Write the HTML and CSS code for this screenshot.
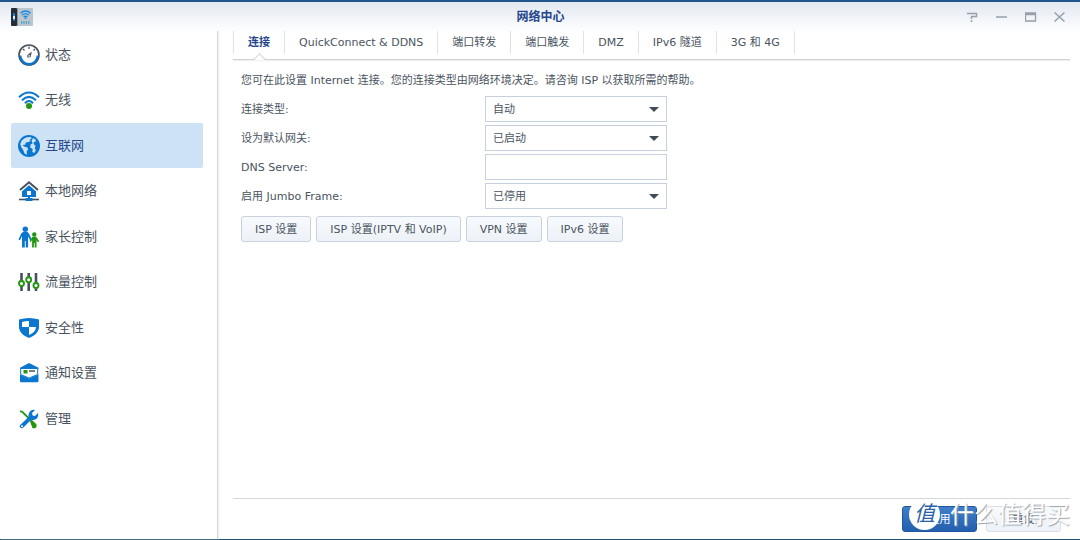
FILE: index.html
```html
<!DOCTYPE html>
<html lang="zh-CN">
<head>
<meta charset="utf-8">
<title>网络中心</title>
<link rel="stylesheet" href="styles.css">
</head>
<body>
<div class="window">
  <header class="titlebar">
    <svg class="app-icon" width="22" height="18" viewBox="0 0 22 18">
      <rect width="22" height="18" rx="1" fill="#bcc5cd"/>
      <rect width="6" height="18" rx="1" fill="#272d34"/>
      <rect x="6" width="1" height="18" fill="#8d969e"/>
      <rect x="2" y="5" width="2" height="8" rx="1" fill="#2687d8"/>
      <rect x="2" y="8" width="2" height="3" fill="#d8f1ff"/>
      <g fill="none" stroke="#1688e8" stroke-width="1.3"><path d="M9.500 5.200Q14.500 0.800 19.500 5.200M11 7.200Q14.500 4 18 7.200M12.600 9Q14.500 7.500 16.400 9"/></g>
      <circle cx="14.500" cy="10.200" r="0.900" fill="#1688e8"/>
      <path d="M10 14.500h9" stroke="#3c9fcc" stroke-width="2.500" stroke-dasharray="1.200 1.200"/>
    </svg>
    <h1 class="title">网络中心</h1>
    <div class="controls">
      <button class="control" aria-label="帮助"><svg width="12" height="12" viewBox="0 0 12 12"><path d="M0 2.500h9.500v3H4.500V8M4.500 9v2" fill="none" stroke="#979fac" stroke-width="1.500"/></svg></button>
      <button class="control" aria-label="最小化"><svg width="12" height="12" viewBox="0 0 12 12"><path d="M0 6h11" stroke="#979fac" stroke-width="1.500"/></svg></button>
      <button class="control" aria-label="最大化"><svg width="12" height="12" viewBox="0 0 12 12"><path d="M0.500 2h10v8H0.500zM0.500 3.500h10" fill="none" stroke="#979fac" stroke-width="1.300"/></svg></button>
      <button class="control" aria-label="关闭"><svg width="12" height="12" viewBox="0 0 12 12"><path d="M0.500 1.500l10 9M10.500 1.500l-10 9" stroke="#979fac" stroke-width="1.500"/></svg></button>
    </div>
  </header>
  <div class="body">
    <div class="sidebar">
    <nav class="nav">
      <a class="nav-item" href="#status"><svg class="nav-icon" viewBox="0 0 22 22"><circle cx="11" cy="11" r="10" fill="#fff" stroke="#47515e" stroke-width="1.600"/><path d="M2.300 11.500A8.700 8.700 0 0 0 19.700 11.500" fill="none" stroke="#0b76cf" stroke-width="2.200"/><path d="M11 2.500v2.500M5 5l1.500 1.500M17 5l-1.500 1.500" stroke="#47515e" stroke-width="1.200"/><path d="M13.800 7.500L12.700 13l-3.200.8-.3-2.500z" fill="#47515e"/><circle cx="11.200" cy="11.900" r="0.800" fill="#fff"/></svg>状态</a>
      <a class="nav-item" href="#wireless"><svg class="nav-icon" viewBox="0 0 22 22"><g fill="none" stroke="#0b76cf" stroke-width="2"><path d="M1 8.200Q11-1.200 21 8.200M4 11.200Q11 4.500 18 11.200M7 14.200Q11 10 15 14.200"/></g><circle cx="11" cy="17" r="3" fill="#249612"/></svg>无线</a>
      <a class="nav-item nav-item-active" href="#internet" aria-current="page"><svg class="nav-icon" viewBox="0 0 22 22"><circle cx="11" cy="11" r="11" fill="#0b76cf"/><path d="M2.300 9L3.600 5.800 6.500 3.300 9 2.200l4-.1.500 1.600-2 .8 1.200 1.200L10.500 7l-2.800.6-.5 2.200-2.700.2 1.600 1.500 3.300 1.100.7 2-1.500 1.900.4 3.300-2.500-1.300-1.200-3.300L3.200 12zM15 3l2.500 1.500.3 2-2.300.7.300 2 1.800 1.500-.8 2.500 1 2.300-1.500 2.500-2-1 .4-3-2.500-1.600.4-3 2-1-1-2.500z" fill="#cde3f5"/></svg>互联网</a>
      <a class="nav-item" href="#lan"><svg class="nav-icon" viewBox="0 0 22 22"><path d="M4 10.500V17h14v-6.500L11 4.500z" fill="#0b76cf"/><path d="M2 10.500L11 2.500 20 10.500" fill="none" stroke="#fff" stroke-width="4"/><path d="M2 10L11 2.200 20 10" fill="none" stroke="#47515e" stroke-width="2"/><path d="M11 6.200L4.500 12V17h13v-5z" fill="#0b76cf"/><rect x="9" y="11" width="4" height="4" fill="#fff"/><path d="M10 17h2v2h-2z" fill="#0b76cf"/><path d="M1 19.500h20" stroke="#47515e" stroke-width="1.600"/><rect x="7.500" y="18" width="7" height="3" fill="#0b76cf"/></svg>本地网络</a>
      <a class="nav-item" href="#parental"><svg class="nav-icon" viewBox="0 0 22 22"><g fill="#0b76cf"><circle cx="7.300" cy="3.300" r="2.700"/><path d="M5 6h4.600l1.300 1.500 2.800 6-1.600.8-2-4V21.500H7.700V15h-.9v6.500H4V10l-2 4.300-1.500-.8 2.700-6z"/></g><g fill="#249612"><circle cx="16.300" cy="8.500" r="2.200"/><path d="M14.500 10.800h3.600l3.200 4.400-1.300 1.100-1.500-2V21.500h-1.800V17h-.8v4.500h-1.800v-7.400l-1.200 2-1.300-.9z"/></g></svg>家长控制</a>
      <a class="nav-item" href="#traffic"><svg class="nav-icon" viewBox="0 0 22 22"><path d="M3.500 2v18M10.700 2v18M18 2v18" stroke="#47515e" stroke-width="2.600"/><g fill="#fff" stroke="#249612" stroke-width="1.900"><circle cx="3.500" cy="12.500" r="2.500"/><circle cx="10.700" cy="8.800" r="2.500"/><circle cx="18" cy="14.500" r="2.500"/></g></svg>流量控制</a>
      <a class="nav-item" href="#security"><svg class="nav-icon" viewBox="0 0 22 22"><path d="M1 2.500Q11-.5 21 2.500V11Q20 17.500 11 21 2 17.500 1 11z" fill="#0b76cf"/><path d="M11 4v6H4V5Q7 4 11 4zM11 10h7q-.5 5.500-7 8z" fill="#fff"/></svg>安全性</a>
      <a class="nav-item" href="#notify"><svg class="nav-icon" viewBox="0 0 22 22"><path d="M2 5.800L11 1l9.500 4.800V7H2z" fill="#0b76cf"/><path d="M2.700 6.500h17v6L11 16l-8.300-3.500z" fill="#fff" stroke="#0b76cf" stroke-width="1"/><rect x="5.500" y="8" width="4" height="3.500" fill="#249612"/><path d="M11 9h6" stroke="#47515e" stroke-width="1.500"/><path d="M2 12.500l9 4 9.500-4V19q0 1.200-1.200 1.200H3.200Q2 20.200 2 19z" fill="#0b76cf"/></svg>通知设置</a>
      <a class="nav-item" href="#manage"><svg class="nav-icon" viewBox="0 0 22 22"><path d="M2 3.200L4.500 4l9 9" fill="none" stroke="#249612" stroke-width="1.800"/><path d="M12 13.500l2-1.500 4.500 4.200v2.700l-1.500 1.300h-2.500z" fill="#249612"/><path d="M2.200 19.600a1.800 1.800 0 0 1 0-2.600l8.300-8q-.4-4.300 2.500-6.500 2-1.200 4-.5L14 5l.6 2.400 2.400.5 3-3q.6 4.400-2 6.200-2.200 1.400-4.700.6l-8.200 8q-1.500 1.200-2.900-.1z" fill="#0b76cf"/><circle cx="4" cy="18.200" r="1" fill="#fff"/></svg>管理</a>
    </nav>
    </div>
    <main class="main">
      <div class="tabs" role="tablist">
        <button class="tab tab-active" role="tab" aria-selected="true">连接</button>
        <button class="tab" role="tab">QuickConnect &amp; DDNS</button>
        <button class="tab" role="tab">端口转发</button>
        <button class="tab" role="tab">端口触发</button>
        <button class="tab" role="tab">DMZ</button>
        <button class="tab" role="tab">IPv6 隧道</button>
        <button class="tab" role="tab">3G 和 4G</button>
      </div>
      <form class="panel">
        <p class="intro">您可在此设置 Internet 连接。您的连接类型由网络环境决定。请咨询 ISP 以获取所需的帮助。</p>
        <div class="row"><label for="type">连接类型:</label><select class="field select" id="type"><option>自动</option></select></div>
        <div class="row"><label for="gateway">设为默认网关:</label><select class="field select" id="gateway"><option>已启动</option></select></div>
        <div class="row"><label for="dns">DNS Server:</label><input class="field" id="dns" type="text"></div>
        <div class="row"><label for="jumbo">启用 Jumbo Frame:</label><select class="field select" id="jumbo"><option>已停用</option></select></div>
        <div class="actions">
          <button class="button" type="button">ISP 设置</button>
          <button class="button" type="button">ISP 设置(IPTV 和 VoIP)</button>
          <button class="button" type="button">VPN 设置</button>
          <button class="button" type="button">IPv6 设置</button>
        </div>
      </form>
      <footer class="footer">
        <button class="button button-wide button-primary" type="button">应用</button>
        <button class="button button-wide button-reset" type="button">重设</button>
        <div class="watermark"><span class="watermark-badge">值</span><span>什么值得买</span></div>
      </footer>
    </main>
  </div>
</div>
</body>
</html>
```

FILE: styles.css
```css
* { box-sizing: border-box; }

body {
  margin: 0;
  background: #fff;
  color: #4a5461;
  font: 11px/16px "DejaVu Sans", "Noto Sans CJK SC", sans-serif;
}

button, input, select { font: inherit; color: inherit; }

.window {
  display: flex;
  flex-direction: column;
  min-height: 100vh;
  border-top: 2px solid #23548c;
  border-bottom: 1px solid #24506f;
  background: linear-gradient(#e2e8f1, #fff 30px);
}

.titlebar {
  display: grid;
  grid-template-columns: 1fr auto 1fr;
  align-items: center;
  height: 29px;
  padding: 0 14px 0 11px;
}

.title {
  margin: 0;
  padding-left: 4px;
  color: #27478c;
  font-size: 12px;
  font-weight: bold;
}

.controls { display: flex; justify-content: flex-end; gap: 17px; }

.control {
  display: flex;
  padding: 0;
  border: 0;
  background: none;
}

.body { display: flex; flex: 1; }

.sidebar {
  flex: 0 0 218px;
  padding: 1px 14px 0 11px;
  border-right: 1px solid #d5d7d9;
  box-shadow: 1px 0 1px #f0f1f2;
}

.nav {
  display: flex;
  flex-direction: column;
  justify-content: space-between;
  min-height: 409px;
}

.nav-item {
  display: flex;
  align-items: center;
  gap: 5px;
  height: 45px;
  padding: 0 7px;
  border-radius: 2px;
  color: #4a5461;
  font-size: 13px;
  text-decoration: none;
}

.nav-item-active { background: #cde3f5; color: #27478c; }

.nav-icon { width: 22px; height: 22px; }

.main {
  display: flex;
  flex: 1;
  flex-direction: column;
  min-width: 0;
  padding: 0 10px 0 15px;
}

.tabs {
  display: flex;
  height: 29px;
  padding-bottom: 5px;
  border-bottom: 1px solid #d0d2d4;
  box-shadow: 0 1px 1px #eff0f1;
}

.tab {
  position: relative;
  padding: 0 14px;
  border: 0;
  border-right: 1px solid #dde4ed;
  background: none;
}

.tab-active {
  border-left: 1px solid #dde4ed;
  color: #27478c;
  font-weight: bold;
}

.tab-active::after {
  position: absolute;
  bottom: -10px;
  left: 21px;
  width: 8px;
  height: 8px;
  border: solid #d0d2d4;
  border-width: 1px 0 0 1px;
  background: linear-gradient(135deg, #fff 50%, transparent 50%);
  content: "";
  transform: rotate(45deg);
}

.panel {
  display: flex;
  flex: 1;
  flex-direction: column;
  gap: 3px;
  padding: 13px 8px;
}

.intro { margin: 0 0 4px; }

.row {
  display: grid;
  grid-template-columns: 244px 182px;
  align-items: center;
}

.row label { padding-top: 2px; }

.field {
  width: 100%;
  height: 26px;
  padding: 1px 7px 0;
  border: 1px solid #c6d0de;
  border-radius: 0;
  background: #fff;
}

.select {
  appearance: none;
  background: url("data:image/svg+xml,%3Csvg xmlns='http://www.w3.org/2000/svg' width='10' height='5'%3E%3Cpath d='M0 0h10L5 5z' fill='%23414b58'/%3E%3C/svg%3E") no-repeat right 7px center #fff;
}

.actions { display: flex; gap: 5px; padding-top: 4px; }

.button {
  height: 26px;
  padding: 1px 13px 0;
  border: 1px solid #c8d2de;
  border-radius: 3px;
  background: linear-gradient(#f7fafd, #edf2f8);
}

.footer {
  position: relative;
  display: flex;
  justify-content: flex-end;
  gap: 9px;
  height: 41px;
  padding: 7px 9px 0 0;
  border-top: 1px solid #d5d7d9;
}

.button-wide { width: 75px; }

.button-primary {
  border-color: #2056a0;
  background: linear-gradient(#3f7fcb, #225fae);
  color: #fff;
}

.button-reset { border-color: #d9dfe6; }

.watermark {
  position: absolute;
  top: 0;
  right: 0;
  display: flex;
  align-items: center;
  gap: 10px;
  color: #fff;
  font-size: 24px;
  line-height: 30px;
  text-shadow: 1px 1px 1px #9aa3ad;
  white-space: nowrap;
  pointer-events: none;
}

.watermark-badge {
  width: 31px;
  height: 31px;
  border-radius: 50%;
  background: #fff;
  color: #2a62a5;
  font-size: 21px;
  font-style: italic;
  text-align: center;
  text-shadow: none;
}
```
